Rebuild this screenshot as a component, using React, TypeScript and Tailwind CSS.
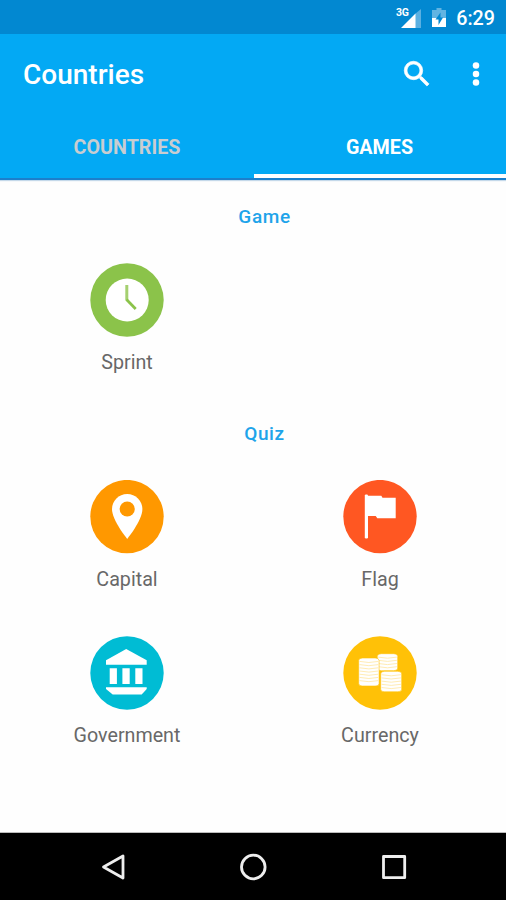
import type { ReactNode } from "react";

type Item = { label: string; icon: ReactNode };

const Clock = () => (
  <svg viewBox="0 0 74 74" className="size-[74px] shrink-0">
    <circle cx="37" cy="37" r="36.7" fill="#8bc34a" />
    <circle cx="37.2" cy="37" r="21.5" fill="#fff" />
    <path d="M36.8 22v15.3" stroke="#a5d070" strokeWidth="3" />
    <path d="M36.5 36.5l9.200 9.400" stroke="#8bc34a" strokeWidth="2.8" />
  </svg>
);

const Pin = () => (
  <svg viewBox="0 0 74 74" className="size-[74px] shrink-0">
    <circle cx="37" cy="36.6" r="36.7" fill="#ff9800" />
    <path
      d="M37.2 14c-8.4 0-15.2 6.8-15.2 15.1C22 40.4 37.2 59 37.2 59s15.2-18.6 15.2-29.9C52.4 20.8 45.6 14 37.2 14z"
      fill="#fff"
    />
    <circle cx="37.2" cy="29" r="7.6" fill="#ff9800" />
  </svg>
);

const Flag = () => (
  <svg viewBox="0 0 74 74" className="size-[74px] shrink-0">
    <circle cx="37" cy="36.6" r="36.7" fill="#ff5722" />
    <rect x="21.8" y="14.4" width="3.2" height="44" rx="1.2" fill="#fff" />
    <path d="M24.5 15.7h13.8l1.2 2h13.2v20.6H34.3L32.7 36h-8.2z" fill="#fff" />
  </svg>
);

const Bank = () => (
  <svg viewBox="0 0 74 74" className="size-[74px] shrink-0">
    <circle cx="37" cy="37" r="36.7" fill="#00bcd4" />
    <g fill="#fff">
      <path d="M36.2 13l20.5 11.3v4.4H16v-4.4z" />
      <path d="M19.7 32.3h7.2V48h-7.2zM32.4 32.3h7.3V48h-7.3zM45.3 32.3h7.2V48h-7.2z" />
      <path d="M16 51.3h40.7V53l-5 5.4h-29L16 53z" />
    </g>
  </svg>
);

const stacks = [
  { x: 34.3, y: 17.7, w: 20.4, h: 17 },
  { x: 15.7, y: 22, w: 20.4, h: 28 },
  { x: 37.7, y: 35.3, w: 21, h: 20.5 },
];

const Coins = () => (
  <svg viewBox="0 0 74 74" className="size-[74px] shrink-0">
    <circle cx="37" cy="37" r="36.7" fill="#ffc107" />
    {stacks.map((s) => (
      <g key={s.x}>
        <rect x={s.x} y={s.y} width={s.w} height={s.h} rx="4" ry="2.6" fill="#fff" stroke="#ffc107" strokeWidth="0.6" />
        {Array.from({ length: Math.floor((s.h - 3) / 3.2) }, (_, i) => (
          <path
            key={i}
            d={`M${s.x + 0.8} ${s.y + 3.4 + i * 3.2}q${s.w / 2 - 0.8} 2.2 ${s.w - 1.6} 0`}
            fill="none"
            stroke="#ffe9ac"
            strokeWidth="0.9"
          />
        ))}
      </g>
    ))}
  </svg>
);

const games: Item[] = [{ label: "Sprint", icon: <Clock /> }];

const quizzes: Item[] = [
  { label: "Capital", icon: <Pin /> },
  { label: "Flag", icon: <Flag /> },
  { label: "Government", icon: <Bank /> },
  { label: "Currency", icon: <Coins /> },
];

function Section({ title, items }: { title: string; items: Item[] }) {
  return (
    <section className="pb-[22px]">
      <h2 className="pt-[22px] pl-[23px] text-center text-[19px] leading-7 font-medium tracking-[0.6px] text-[#1ea4ea]">
        {title}
      </h2>
      <div className="mt-8 grid grid-cols-2 gap-y-[43px]">
        {items.map((item) => (
          <button key={item.label} className="flex h-[113px] flex-col items-center">
            {item.icon}
            <span className="mt-3 pl-px text-[19.7px] leading-7 text-[#686868]">{item.label}</span>
          </button>
        ))}
      </div>
    </section>
  );
}

function StatusBar() {
  return (
    <div className="flex h-[34px] items-center justify-end bg-[#0288d1] pt-[2px] pr-[11px] text-white">
      <svg viewBox="0 0 27 24" className="h-6 w-[27px]">
        <path d="M26 3v19h-6V8z" fill="#5bb0e1" />
        <path d="M20.5 7.5V22H6z" fill="#fff" />
        <text x="1" y="10" fontSize="10.5" fontWeight="700" fontFamily="Roboto, sans-serif" fill="#fff" textLength="13">3G</text>
      </svg>
      <svg viewBox="0 0 14 22" className="ml-[10px] h-[22px] w-[14px]">
        <path d="M4.5 1h5v2H14v9H0V3h4.5z" fill="#62b4e2" />
        <path d="M0 11h14v9H0z" fill="#fff" />
        <path d="M8.500 5.500L3.500 12.500H6.500V18L11 10.500H8.500z" fill="#0288d1" />
      </svg>
      <span className="ml-[10px] pt-[2px] text-[19.7px] leading-6 font-medium">6:29</span>
    </div>
  );
}

export default function App() {
  return (
    <div className="flex h-[900px] w-[506px] flex-col overflow-hidden bg-[#fefefe] font-['Roboto',sans-serif]">
      <StatusBar />

      <header className="mb-px flex h-[146px] flex-col border-b-2 border-[#1c7fcb] bg-[#03a9f4] text-white shadow-[0_1px_1px_#c5d9ea]">
        <div className="flex h-20 items-center pr-[18px] pl-[23px]">
          <h1 className="flex-1 pt-px text-[28px] leading-9 font-medium">Countries</h1>
          <svg viewBox="0 0 24 24" className="mr-[30px] size-[34px]" fill="currentColor" stroke="currentColor" strokeWidth="0.5">
            <path d="M15.5 14h-.79l-.28-.27A6.47 6.47 0 0 0 16 9.500 6.500 6.500 0 1 0 9.500 16c1.610 0 3.090-.59 4.230-1.570l.27.28v.79l5 4.990L20.490 19l-4.990-5zm-6 0C7.010 14 5 11.990 5 9.500S7.010 5 9.500 5 14 7.010 14 9.500 11.990 14 9.500 14z" />
          </svg>
          <svg viewBox="0 0 24 24" className="-mx-[5px] size-[34px]" fill="currentColor">
            <circle cx="12" cy="6" r="2.3" />
            <circle cx="12" cy="12" r="2.3" />
            <circle cx="12" cy="18" r="2.3" />
          </svg>
        </div>
        <nav className="grid flex-1 grid-cols-2 text-[19.7px] font-bold">
          <button className="pt-1 pl-px text-[#c8cdd1]">COUNTRIES</button>
          <button className="ml-px border-b-4 border-white pt-2 pr-px">GAMES</button>
        </nav>
      </header>

      <main className="flex-1">
        <Section title="Game" items={games} />
        <Section title="Quiz" items={quizzes} />
      </main>

      <footer className="flex h-[68px] items-center border-t border-[#bbb] bg-black pl-[98px]">
        <svg viewBox="0 0 30 30" className="size-[30px]" fill="none" stroke="#eee" strokeWidth="2.8" strokeLinejoin="round">
          <path d="M5.500 15L25 4v22z" />
        </svg>
        <svg viewBox="0 0 30 30" className="ml-[110px] size-[30px]" fill="none" stroke="#eee" strokeWidth="2.800">
          <circle cx="15.300" cy="15" r="11.800" />
        </svg>
        <svg viewBox="0 0 30 30" className="ml-[111px] size-[30px]" fill="none" stroke="#eee" strokeWidth="2.800" strokeLinejoin="round">
          <rect x="4.500" y="4.500" width="21.200" height="21.200" />
        </svg>
      </footer>
    </div>
  );
}
